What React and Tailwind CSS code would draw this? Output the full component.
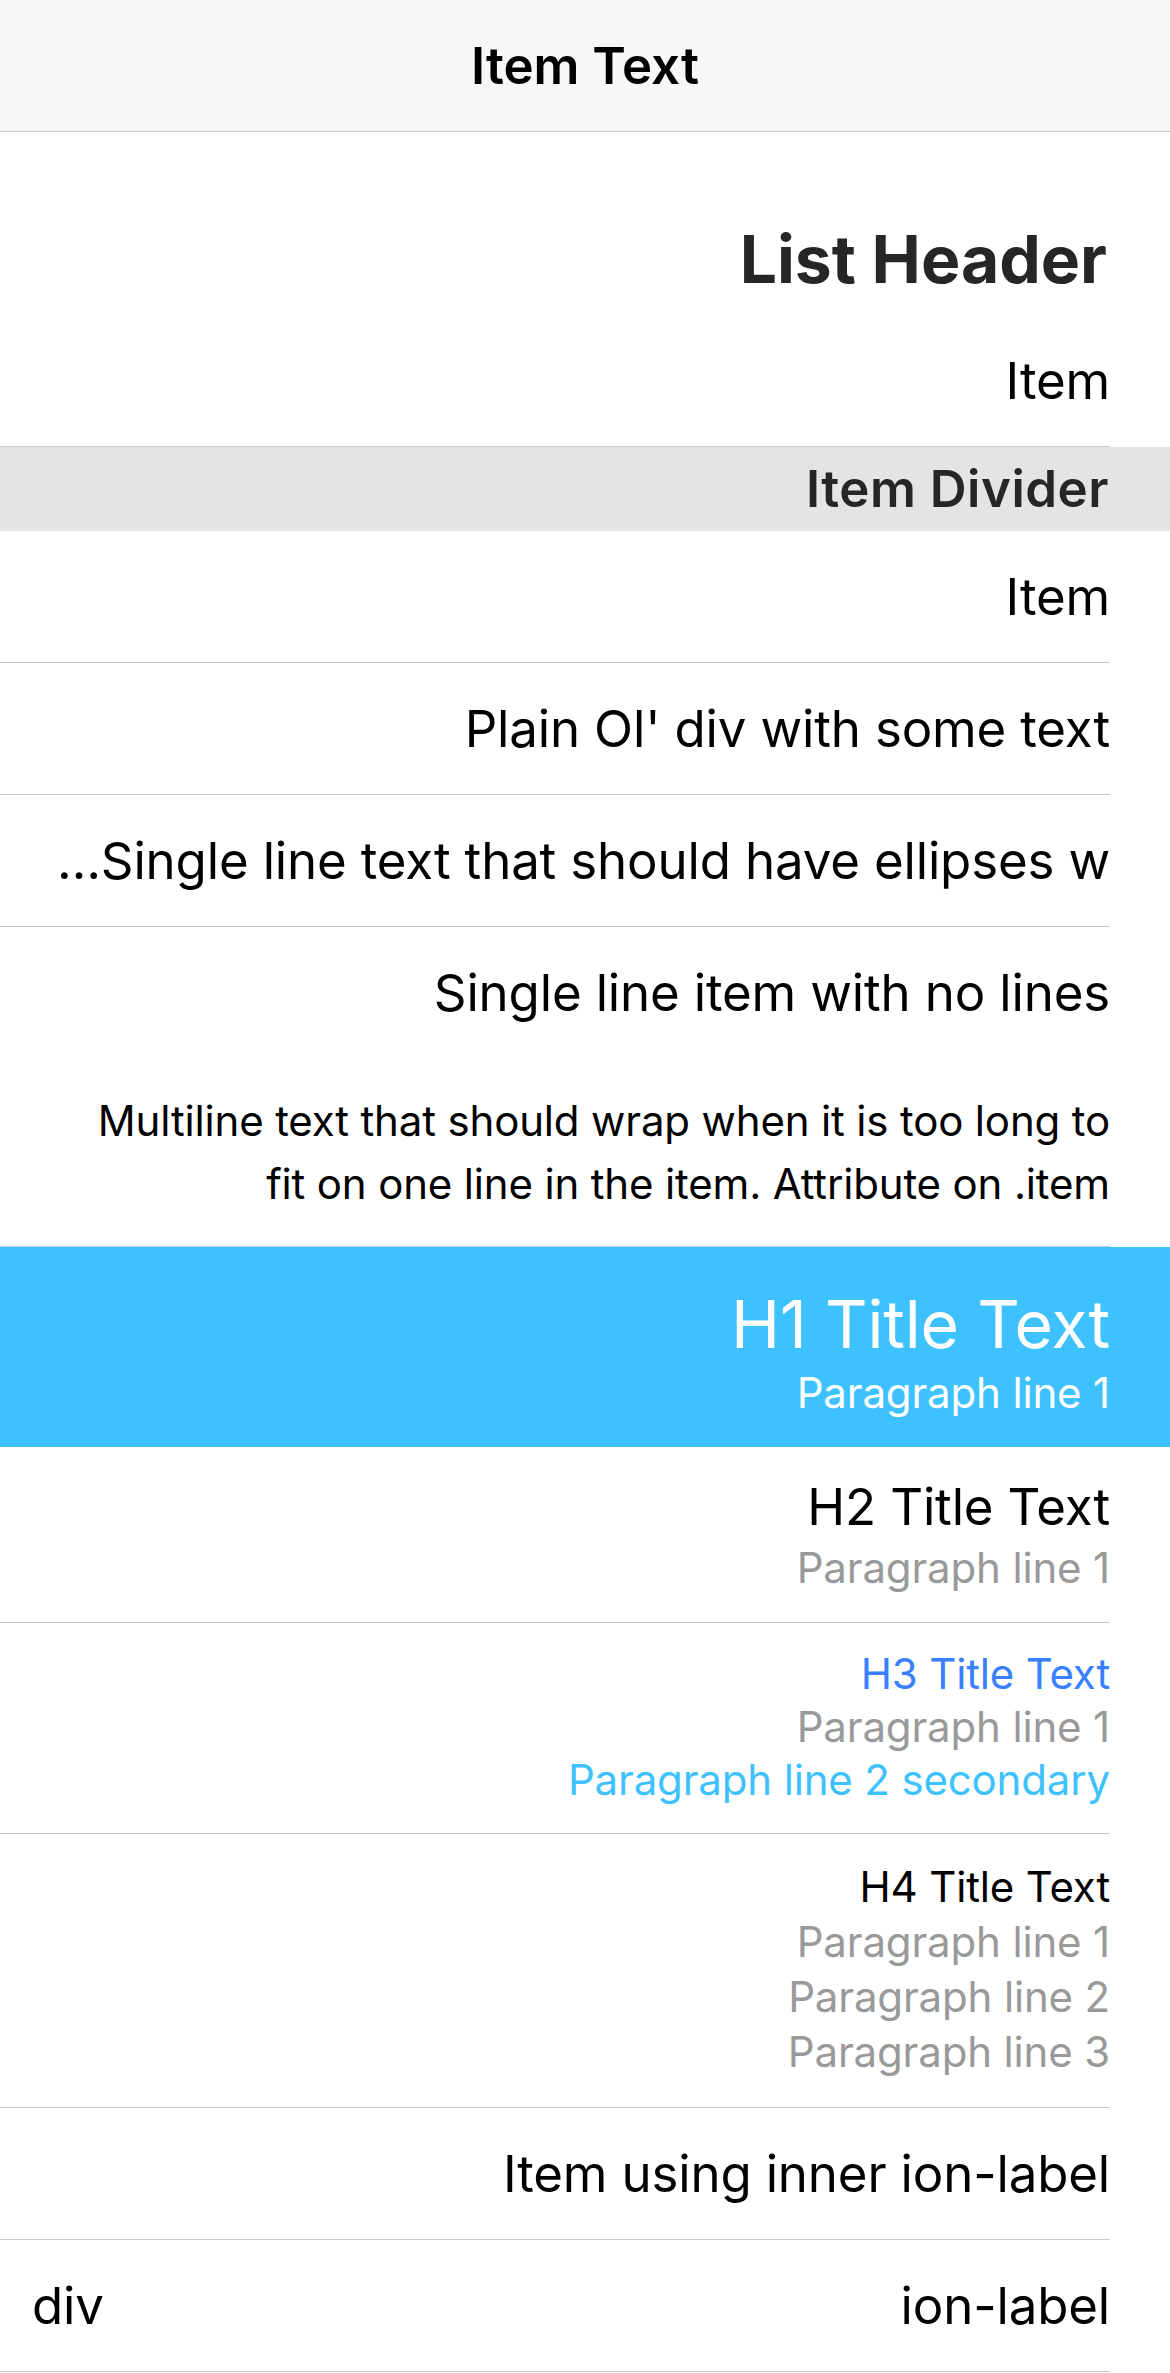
import React from 'react';

// Row wrapper: start padding on the right (RTL page), hairline on the inner part only
const Row = ({ h, lines = true, className = '', children }) => (
  <div className="pr-[60px]">
    <div className={`${h} ${lines ? 'border-b border-[#c8c7cc]' : ''} ${className}`}>
      {children}
    </div>
  </div>
);

const Para = ({ children, className = 'text-[#999999]' }) => (
  <p className={`text-[42px] leading-[48px] text-right ${className}`}>{children}</p>
);

export default function App() {
  return (
    <div className="min-h-screen bg-white text-black font-[Inter,'Noto_Sans',sans-serif] tracking-[-0.01em]">
      {/* Toolbar */}
      <div className="h-[132px] bg-[#f7f7f7] border-b border-[#c8c7cc] flex items-center justify-center">
        <h1 className="text-[51px] font-semibold leading-[60px] tracking-normal">Item Text</h1>
      </div>

      {/* List header */}
      <div className="h-[183px] pr-[63px] pt-[88px] text-right">
        <h2 className="text-[66px] font-bold leading-[78px] tracking-normal text-[#262626]">List Header</h2>
      </div>

      <Row h="h-[132px]" className="flex items-center justify-end">
        <span className="text-[51px] leading-[60px]">Item</span>
      </Row>

      {/* Divider */}
      <div className="h-[84px] bg-[#e4e4e4] pr-[61px] flex items-center justify-end">
        <span className="text-[51px] font-semibold leading-[60px] tracking-[0.01em] text-[#262626]">Item Divider</span>
      </div>

      <Row h="h-[132px]" className="flex items-center justify-end">
        <span className="text-[51px] leading-[60px]">Item</span>
      </Row>

      <Row h="h-[132px]" className="flex items-center justify-end">
        <div className="text-[51px] leading-[60px]">Plain Ol' div with some text</div>
      </Row>

      <Row h="h-[132px]" className="flex items-center justify-end overflow-hidden">
        <span className="text-[51px] leading-[60px] whitespace-nowrap">…Single line text that should have ellipses w</span>
      </Row>

      <Row h="h-[131px]" lines={false} className="flex items-center justify-end">
        <span className="text-[51px] leading-[60px]">Single line item with no lines</span>
      </Row>

      <Row h="h-[189px]" className="flex flex-col items-end justify-center text-[42px] leading-[63px]">
        <span>Multiline text that should wrap when it is too long to</span>
        <span>fit on one line in the item. Attribute on .item</span>
      </Row>

      {/* Colored item */}
      <div className="h-[200px] bg-[#3dc2ff] pr-[60px] pt-[38px] text-white text-right">
        <h1 className="text-[66px] leading-[78px]">H1 Title Text</h1>
        <p className="mt-[6px] text-[42px] leading-[48px]">Paragraph line 1</p>
      </div>

      <Row h="h-[176px]" className="pt-[30px] text-right">
        <h2 className="text-[51px] leading-[60px] mb-[7px]">H2 Title Text</h2>
        <Para>Paragraph line 1</Para>
      </Row>

      <Row h="h-[211px]" className="pt-[27px] text-right">
        <h3 className="text-[42px] leading-[48px] text-[#3880ff] mb-[5px]">H3 Title Text</h3>
        <Para className="text-[#999999] mb-[5px]">Paragraph line 1</Para>
        <Para className="text-[#3dc2ff]">Paragraph line 2 secondary</Para>
      </Row>

      <Row h="h-[274px]" className="pt-[29px] text-right">
        <h4 className="text-[42px] leading-[48px] mb-[7px]">H4 Title Text</h4>
        <Para className="text-[#999999] mb-[7px]">Paragraph line 1</Para>
        <Para className="text-[#999999] mb-[7px]">Paragraph line 2</Para>
        <Para>Paragraph line 3</Para>
      </Row>

      <Row h="h-[132px]" className="flex items-center justify-end">
        <label className="text-[51px] leading-[60px]">Item using inner ion-label</label>
      </Row>

      <Row h="h-[132px]" className="flex items-center justify-between pl-[32px]">
        <div className="text-[51px] leading-[60px]">div</div>
        <label className="text-[51px] leading-[60px]">ion-label</label>
      </Row>
    </div>
  );
}
